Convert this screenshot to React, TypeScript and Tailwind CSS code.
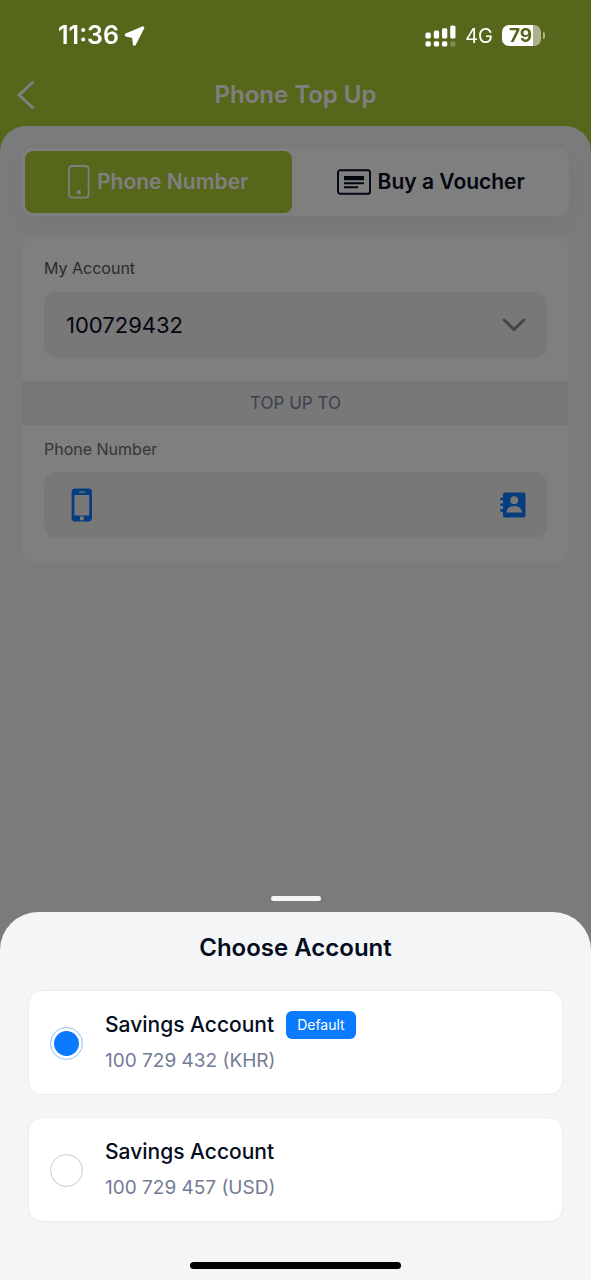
import { useState } from "react";

const accounts = [
  { id: "100729432", label: "100 729 432 (KHR)", name: "Savings Account", isDefault: true },
  { id: "100729457", label: "100 729 457 (USD)", name: "Savings Account", isDefault: false },
];

function LocationIcon() {
  return (
    <svg viewBox="0 0 22 22" className="size-[22px]" aria-hidden="true">
      <path
        d="M19.8 2.8 3.2 10l6.6 1.6q.7.1.8.8l.8 6.8z"
        fill="#fff"
        stroke="#fff"
        strokeWidth="3"
        strokeLinejoin="round"
      />
    </svg>
  );
}

function SignalIcon() {
  return (
    <svg viewBox="0 0 31 22" className="h-[22px] w-[31px]" fill="#fff" aria-hidden="true">
      <rect x="0.5" y="7.5" width="5.3" height="6" rx="1.6" />
      <rect x="8.8" y="5.5" width="5.3" height="8" rx="1.6" />
      <rect x="17" y="3.2" width="5.3" height="10.3" rx="1.6" />
      <rect x="25.2" y="0.5" width="5.3" height="13" rx="1.6" />
      <rect x="0.5" y="16.2" width="5.3" height="5.3" rx="1.6" />
      <rect x="8.8" y="16.2" width="5.3" height="5.3" rx="1.6" />
      <rect x="17" y="16.2" width="5.3" height="5.3" rx="1.6" />
      <rect x="25.2" y="16.2" width="5.3" height="5.3" rx="1.6" opacity="0.25" />
    </svg>
  );
}

function Battery() {
  return (
    <div className="flex items-center gap-0.5">
      <div className="flex h-[21px] w-[39px] items-center justify-center rounded-[7px] bg-[linear-gradient(to_right,#fff_79%,#abb28d_79%)] pr-0.5 text-[19px] leading-none font-bold text-[#56661b]">
        79
      </div>
      <div className="h-[7px] w-0.5 rounded-r-full bg-[#abb28d]" />
    </div>
  );
}

function BackIcon() {
  return (
    <svg viewBox="0 0 18 30" className="h-[30px] w-[18px]" fill="none" aria-hidden="true">
      <path d="M15.5 2.5 2 15l13.5 12.5" stroke="#fff" strokeWidth="3" strokeLinecap="round" strokeLinejoin="round" />
    </svg>
  );
}

function PhoneOutlineIcon() {
  return (
    <svg viewBox="0 0 22 34" className="h-[34px] w-[22px]" fill="none" aria-hidden="true">
      <rect x="1" y="1" width="19.6" height="31.6" rx="3" stroke="#fff" strokeWidth="1.8" />
      <circle cx="10.8" cy="27.2" r="2.1" fill="#fff" />
    </svg>
  );
}

function VoucherIcon() {
  return (
    <svg viewBox="0 0 34 26" className="h-[26px] w-[34px]" aria-hidden="true">
      <rect x="1" y="1.2" width="32" height="23.6" rx="2.4" fill="none" stroke="#040c20" strokeWidth="1.9" />
      <path d="M7 7h20v4.200H7zM7 13.200h20v2H7zM7 17.200h14v2H7z" fill="#040c20" />
    </svg>
  );
}

function ChevronIcon() {
  return (
    <svg viewBox="0 0 24 14" className="h-3.5 w-6" fill="none" aria-hidden="true">
      <path d="M2.2 2 12 11.6 21.8 2" stroke="#8c8d92" strokeWidth="3" strokeLinecap="round" strokeLinejoin="round" />
    </svg>
  );
}

function PhoneIcon() {
  return (
    <svg viewBox="0 0 22 34" className="h-[34px] w-[22px]" aria-hidden="true">
      <path
        fillRule="evenodd"
        fill="#0a7aff"
        d="M4 .5h13.6A3.4 3.4 0 0 1 21 3.900v26.200a3.400 3.400 0 0 1-3.400 3.400H4A3.400 3.400 0 0 1 .6 30.100V3.900A3.400 3.400 0 0 1 4 .5zM3.400 7v20.500h14.800V7zM8.200 3.500v1.300h5.400V3.500zM9 28.500h3.800v3.800H9z"
      />
    </svg>
  );
}

function ContactsIcon() {
  return (
    <svg viewBox="0 0 26 26" className="size-[26px]" aria-hidden="true">
      <rect x="3" y="0.5" width="22.5" height="25" rx="2" fill="#0a7aff" />
      <path d="M.3 7h5M.3 12.800h5M.3 18.400h5" stroke="#0a7aff" strokeWidth="2.6" />
      <circle cx="14.2" cy="8.200" r="3.9" fill="#f0f1f3" />
      <path d="M6.400 20.500c0-4 3.500-6.500 7.800-6.500s7.800 2.500 7.800 6.500z" fill="#f0f1f3" />
    </svg>
  );
}

export default function App() {
  const [selected, setSelected] = useState("100729432");

  return (
    <div className="flex min-h-screen flex-col bg-[#accc36] font-[Inter,'Liberation_Sans',sans-serif] text-[#040c20]">
      <div className="relative z-20 flex h-[71px] items-center justify-between pr-[46px] pl-[58px] text-white">
        <div className="flex items-center gap-1">
          <span className="text-[25px] font-semibold">11:36</span>
          <LocationIcon />
        </div>
        <div className="flex items-center gap-[9px]">
          <SignalIcon />
          <span className="text-[20px]">4G</span>
          <Battery />
        </div>
      </div>

      <header className="grid h-[55px] grid-cols-[1fr_auto_1fr] items-center px-[17px] pb-2 text-white">
        <button type="button" aria-label="Back" className="justify-self-start">
          <BackIcon />
        </button>
        <h1 className="text-[24px] leading-8 font-semibold">Phone Top Up</h1>
      </header>

      <main className="flex-1 rounded-t-[26px] bg-[#f5f6f8] px-[22px] pt-[22px]">
        <div className="grid grid-cols-2 rounded-xl bg-white p-[3px] text-[21px] font-semibold shadow-[0_8px_24px_rgba(0,0,0,0.04)]">
          <button
            type="button"
            aria-pressed="true"
            className="mr-1 flex h-[62px] items-center justify-center gap-[7px] rounded-lg bg-[#accc36] text-white"
          >
            <PhoneOutlineIcon />
            Phone Number
          </button>
          <button type="button" aria-pressed="false" className="flex h-[62px] items-center justify-center gap-[7px] rounded-lg">
            <VoucherIcon />
            Buy a Voucher
          </button>
        </div>

        <div className="mt-5 overflow-hidden rounded-[14px] bg-white">
          <div className="px-[22px] pt-5 pb-[23px]">
            <label htmlFor="account" className="block text-[16px] leading-6 text-[#55565c]">
              My Account
            </label>
            <div className="relative mt-3">
              <select
                id="account"
                value={selected}
                onChange={(e) => setSelected(e.target.value)}
                className="h-[66px] w-full appearance-none rounded-xl bg-[#f0f1f3] px-[22px] text-[22px]"
              >
                {accounts.map((a) => (
                  <option key={a.id} value={a.id}>
                    {a.id}
                  </option>
                ))}
              </select>
              <div className="pointer-events-none absolute inset-y-0 right-[21px] flex items-center">
                <ChevronIcon />
              </div>
            </div>
          </div>

          <h2 className="bg-[#f0f0f2] text-center text-[17px] leading-[44px] text-[#7b8398]">TOP UP TO</h2>

          <div className="px-[22px] pt-3 pb-6">
            <label htmlFor="phone" className="block text-[16px] leading-6 text-[#6b6c72]">
              Phone Number
            </label>
            <div className="mt-[11px] flex h-[66px] items-center gap-3 rounded-xl bg-[#f0f1f3] pr-[21px] pl-[27px]">
              <PhoneIcon />
              <input id="phone" type="tel" className="min-w-0 flex-1 bg-transparent text-[22px] outline-none" />
              <button type="button" aria-label="Contacts">
                <ContactsIcon />
              </button>
            </div>
          </div>
        </div>
      </main>

      <div className="fixed inset-0 z-10 flex flex-col justify-end bg-black/50">
        <div className="mx-auto mb-[11px] h-[5px] w-[50px] rounded-full bg-[#f5f6f8]" />
        <section
          role="dialog"
          aria-labelledby="sheet-title"
          className="rounded-t-[38px] bg-[#f4f5f7] px-7 pt-4 pb-[11px]"
        >
          <h2 id="sheet-title" className="text-center text-[24px] leading-10 font-semibold">
            Choose Account
          </h2>
          <div className="mt-[22px] flex flex-col gap-[22px]">
            {accounts.map((a) => (
              <label
                key={a.id}
                className="flex items-center gap-[22px] rounded-[14px] border border-[#eaecef] bg-white px-[21px] pt-4 pb-[15px]"
              >
                <input
                  type="radio"
                  name="account-choice"
                  checked={selected === a.id}
                  onChange={() => setSelected(a.id)}
                  className="size-[33px] shrink-0 appearance-none rounded-full border border-[#c6c8cc] bg-clip-content p-[3px] checked:border-[#8dc0fb] checked:bg-[#0a7aff]"
                />
                <span className="flex flex-col">
                  <span className="flex items-center gap-3 text-[21px] leading-9 font-medium">
                    {a.name}
                    {a.isDefault && (
                      <span className="rounded-md bg-[#0a7aff] px-[11px] text-[14px] leading-7 font-normal text-white">
                        Default
                      </span>
                    )}
                  </span>
                  <span className="text-[19px] leading-9 text-[#727c94]">{a.label}</span>
                </span>
              </label>
            ))}
          </div>
          <div className="mx-auto mt-10 h-[7px] w-[211px] rounded-full bg-black" />
        </section>
      </div>
    </div>
  );
}
